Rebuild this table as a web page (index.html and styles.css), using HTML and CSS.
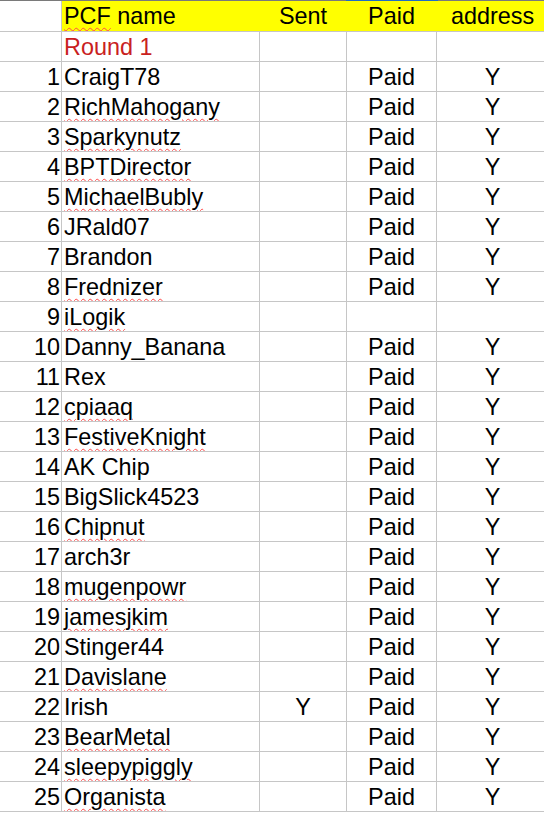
FILE: index.html
```html
<!DOCTYPE html>
<html>
<head>
<meta charset="utf-8">
<link rel="stylesheet" href="styles.css">
</head>
<body>
<div class="sheet">
  <div class="topbar"><span></span><span></span><span></span><span class="sel"></span><span></span></div>
  <div class="row head">
    <div class="c num"></div>
    <div class="c name y"><span><span class="sp">PCF</span> name</span></div>
    <div class="c mid y">Sent</div>
    <div class="c mid y">Paid</div>
    <div class="c mid y last">address</div>
  </div>
  <div class="row"><div class="c num"></div><div class="c name red">Round 1</div><div class="c mid"></div><div class="c mid"></div><div class="c mid"></div></div>
  <div class="row"><div class="c num">1</div><div class="c name">CraigT78</div><div class="c mid"></div><div class="c mid">Paid</div><div class="c mid">Y</div></div>
  <div class="row"><div class="c num">2</div><div class="c name"><span class="sp">RichMahogany</span></div><div class="c mid"></div><div class="c mid">Paid</div><div class="c mid">Y</div></div>
  <div class="row"><div class="c num">3</div><div class="c name"><span class="sp">Sparkynutz</span></div><div class="c mid"></div><div class="c mid">Paid</div><div class="c mid">Y</div></div>
  <div class="row"><div class="c num">4</div><div class="c name"><span class="sp">BPTDirector</span></div><div class="c mid"></div><div class="c mid">Paid</div><div class="c mid">Y</div></div>
  <div class="row"><div class="c num">5</div><div class="c name"><span class="sp">MichaelBubly</span></div><div class="c mid"></div><div class="c mid">Paid</div><div class="c mid">Y</div></div>
  <div class="row"><div class="c num">6</div><div class="c name">JRald07</div><div class="c mid"></div><div class="c mid">Paid</div><div class="c mid">Y</div></div>
  <div class="row"><div class="c num">7</div><div class="c name">Brandon</div><div class="c mid"></div><div class="c mid">Paid</div><div class="c mid">Y</div></div>
  <div class="row"><div class="c num">8</div><div class="c name"><span class="sp">Frednizer</span></div><div class="c mid"></div><div class="c mid">Paid</div><div class="c mid">Y</div></div>
  <div class="row"><div class="c num">9</div><div class="c name"><span class="sp">iLogik</span></div><div class="c mid"></div><div class="c mid"></div><div class="c mid"></div></div>
  <div class="row"><div class="c num">10</div><div class="c name">Danny_Banana</div><div class="c mid"></div><div class="c mid">Paid</div><div class="c mid">Y</div></div>
  <div class="row"><div class="c num">11</div><div class="c name">Rex</div><div class="c mid"></div><div class="c mid">Paid</div><div class="c mid">Y</div></div>
  <div class="row"><div class="c num">12</div><div class="c name"><span class="sp">cpiaaq</span></div><div class="c mid"></div><div class="c mid">Paid</div><div class="c mid">Y</div></div>
  <div class="row"><div class="c num">13</div><div class="c name"><span class="sp">FestiveKnight</span></div><div class="c mid"></div><div class="c mid">Paid</div><div class="c mid">Y</div></div>
  <div class="row"><div class="c num">14</div><div class="c name">AK Chip</div><div class="c mid"></div><div class="c mid">Paid</div><div class="c mid">Y</div></div>
  <div class="row"><div class="c num">15</div><div class="c name">BigSlick4523</div><div class="c mid"></div><div class="c mid">Paid</div><div class="c mid">Y</div></div>
  <div class="row"><div class="c num">16</div><div class="c name"><span class="sp">Chipnut</span></div><div class="c mid"></div><div class="c mid">Paid</div><div class="c mid">Y</div></div>
  <div class="row"><div class="c num">17</div><div class="c name">arch3r</div><div class="c mid"></div><div class="c mid">Paid</div><div class="c mid">Y</div></div>
  <div class="row"><div class="c num">18</div><div class="c name"><span class="sp">mugenpowr</span></div><div class="c mid"></div><div class="c mid">Paid</div><div class="c mid">Y</div></div>
  <div class="row"><div class="c num">19</div><div class="c name"><span class="sp">jamesjkim</span></div><div class="c mid"></div><div class="c mid">Paid</div><div class="c mid">Y</div></div>
  <div class="row"><div class="c num">20</div><div class="c name">Stinger44</div><div class="c mid"></div><div class="c mid">Paid</div><div class="c mid">Y</div></div>
  <div class="row"><div class="c num">21</div><div class="c name"><span class="sp">Davislane</span></div><div class="c mid"></div><div class="c mid">Paid</div><div class="c mid">Y</div></div>
  <div class="row"><div class="c num">22</div><div class="c name">Irish</div><div class="c mid">Y</div><div class="c mid">Paid</div><div class="c mid">Y</div></div>
  <div class="row"><div class="c num">23</div><div class="c name"><span class="sp">BearMetal</span></div><div class="c mid"></div><div class="c mid">Paid</div><div class="c mid">Y</div></div>
  <div class="row"><div class="c num">24</div><div class="c name"><span class="sp">sleepypiggly</span></div><div class="c mid"></div><div class="c mid">Paid</div><div class="c mid">Y</div></div>
  <div class="row"><div class="c num">25</div><div class="c name"><span class="sp">Organista</span></div><div class="c mid"></div><div class="c mid">Paid</div><div class="c mid">Y</div></div>
</div>
</body>
</html>
```

FILE: styles.css
```css
html, body {
  margin: 0;
  padding: 0;
  background: #ffffff;
  overflow: hidden;
}
.sheet {
  width: 549px;
  font-family: "Liberation Sans", Arial, sans-serif;
  font-size: 23.4px;
  color: #000000;
}
.topbar {
  display: grid;
  grid-template-columns: 62px 198px 87px 90px 112px;
  height: 1px;
  background: #7a7a7a;
}
.topbar .sel {
  background: #1f6dc6;
  margin-left: -1px;
  margin-right: -1px;
}
.row {
  display: grid;
  grid-template-columns: 62px 198px 87px 90px 112px;
  height: 30px;
  box-sizing: border-box;
  border-bottom: 1px solid #c6c6c6;
}
.row.head {
  height: 31px;
}
.c {
  box-sizing: border-box;
  border-right: 1px solid #c6c6c6;
  display: flex;
  align-items: flex-end;
  white-space: nowrap;
  overflow: hidden;
  line-height: normal;
}
.num {
  justify-content: flex-end;
  padding-right: 1px;
}
.name {
  padding-left: 2px;
}
.mid {
  justify-content: center;
}
.head .c {
  padding-bottom: 1px;
}
.head .y {
  background: #ffff00;
  border-right-color: #ffff00;
}
.head .y.last {
  border-right-color: #ffffff;
}
.red {
  color: #c9211e;
}
.sp {
  text-decoration: underline wavy #ff4a4a;
  text-decoration-thickness: 1px;
  text-underline-offset: 3px;
}
```
